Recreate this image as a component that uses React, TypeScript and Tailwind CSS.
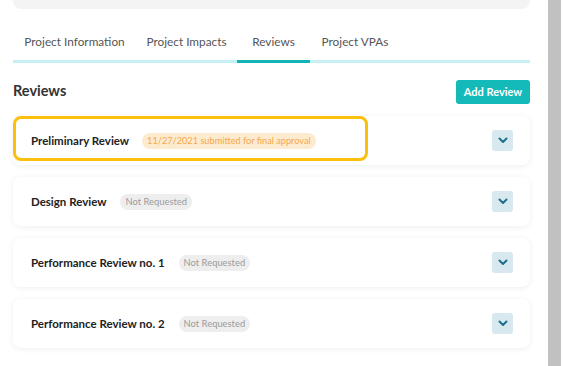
import React from "react";

type Review = {
  title: string;
  status: string;
  submitted?: boolean;
};

const reviews: Review[] = [
  { title: "Preliminary Review", status: "11/27/2021 submitted for final approval", submitted: true },
  { title: "Design Review", status: "Not Requested" },
  { title: "Performance Review no. 1", status: "Not Requested" },
  { title: "Performance Review no. 2", status: "Not Requested" },
];

const tabs = [
  { label: "Project Information", w: "w-[123px]" },
  { label: "Project Impacts", w: "w-[101px]" },
  { label: "Reviews", w: "w-[73px]", active: true },
  { label: "Project VPAs", w: "w-[90px]" },
];

function Chevron() {
  return (
    <svg width="10" height="7" viewBox="0 0 10 7" fill="none">
      <path d="M1.5 1.5L5 5L8.5 1.5" stroke="#1f6f8f" strokeWidth="2" strokeLinecap="round" strokeLinejoin="round" />
    </svg>
  );
}

function ReviewCard({ review }: { review: Review }) {
  return (
    <div className="relative h-[49px] rounded-lg bg-white shadow-[0_1px_6px_rgba(0,0,0,0.07)] flex items-center pl-[18px] pr-[17px]">
      {review.submitted && (
        <div className="absolute left-0 top-0 w-[355px] h-[45px] rounded-lg border-[3px] border-[#fbbf0e]" />
      )}
      <span className="text-[11.5px] font-bold text-[#222]">{review.title}</span>
      <span
        className={
          review.submitted
            ? "ml-[13px] h-[16px] px-[5px] rounded-full bg-[#fdebcf] text-[#f6a84c] text-[9.2px] leading-none flex items-center"
            : "ml-[14px] h-[16px] px-[5px] rounded-full bg-[#eeeeee] text-[#9b9b9b] text-[9.4px] leading-none flex items-center"
        }
      >
        {review.status}
      </span>
      <div className="ml-auto w-[21px] h-[21px] rounded-[3px] bg-[#d7e8ee] flex items-center justify-center">
        <Chevron />
      </div>
    </div>
  );
}

export default function App() {
  return (
    <div className="w-[563px] h-[366px] overflow-hidden bg-white flex" style={{ fontFamily: "Lato, 'Noto Sans', sans-serif" }}>
      <div className="w-[548px] pl-[13px] pr-[18px] flex flex-col">
        <div className="h-[9px] bg-[#f4f4f4] rounded-b-lg" />

        <div className="mt-[14px] flex border-b-[3px] border-[#c6f0f3]">
          {tabs.map((t) => (
            <div key={t.label} className={`${t.w} relative h-[37px] flex items-center justify-center text-[11.8px] text-[#555]`}>
              {t.label}
              {t.active && <div className="absolute left-0 right-0 -bottom-[3px] h-[3px] bg-[#10b4b4]" />}
            </div>
          ))}
        </div>

        <div className="mt-[17px] flex items-center justify-between h-[24px]">
          <h2 className="text-[14.5px] font-bold text-[#333] -mt-[3px]">Reviews</h2>
          <button className="h-[24px] w-[74px] rounded-[3px] bg-[#14baba] text-white text-[11px] font-bold">
            Add Review
          </button>
        </div>

        <div className="mt-[12px] flex flex-col gap-[12px]">
          {reviews.map((r) => (
            <ReviewCard key={r.title} review={r} />
          ))}
        </div>
      </div>
      <div className="w-[13px] h-full bg-[#c1c1c1]" />
    </div>
  );
}
